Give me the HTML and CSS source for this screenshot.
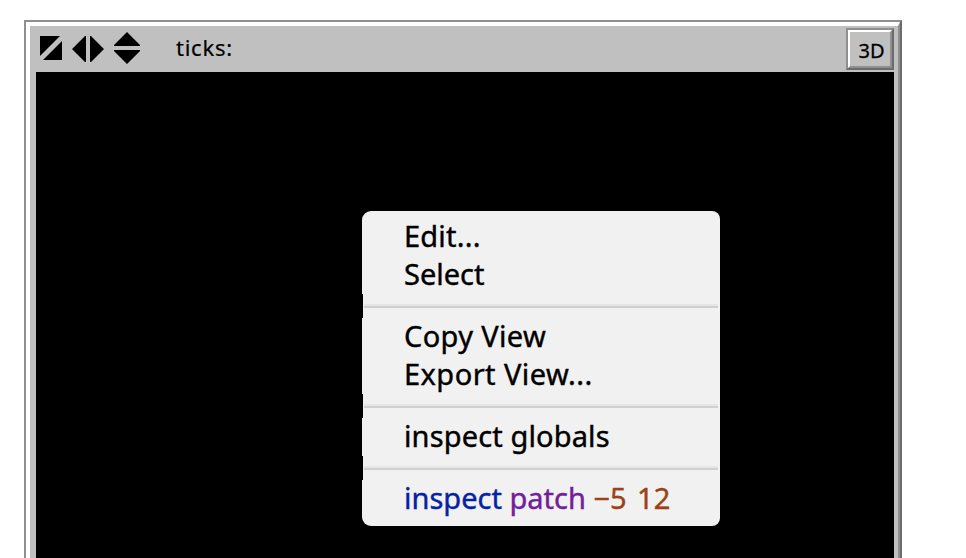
FILE: index.html
```
<!DOCTYPE html>
<html lang="en">
<head>
<meta charset="utf-8">
<title>View</title>
<link rel="stylesheet" href="styles.css">
</head>
<body>
<main class="frame">
  <div class="panel">
    <header class="toolbar">
      <svg class="resize-icons" width="104" height="46" viewBox="36 26 104 46" aria-hidden="true">
        <path d="M40 36H60L40 56ZM62 41V60H43Z"/>
        <path d="M86 36V62H85L72 49L85 36ZM90 36H91L104 49L91 62H90Z"/>
        <path d="M127 32L140 45V46H114V45ZM114 50H140V51L127 64L114 51Z"/>
      </svg>
      <span class="ticks">ticks:</span>
      <button class="view-3d"><span>3D</span></button>
    </header>
    <div class="world">
      <ul class="menu">
        <li class="item"><span class="edit">Edit...</span></li>
        <li class="item"><span class="select">Select</span></li>
        <li class="separator"></li>
        <li class="item"><span class="copy">Copy View</span></li>
        <li class="item"><span class="export">Export View...</span></li>
        <li class="separator"></li>
        <li class="item"><span class="globals">inspect globals</span></li>
        <li class="separator"></li>
        <li class="item"><span class="patch"><span class="verb">inspect</span> <span class="noun">patch</span> <span class="coords">−5 12</span></span></li>
      </ul>
    </div>
  </div>
</main>
</body>
</html>
```
FILE: styles.css
```
* { box-sizing: border-box; }
body {
  margin: 0;
  height: 558px;
  overflow: hidden;
  background: #fff;
  color: #000;
  font-family: "Noto Sans", "Open Sans", sans-serif;
}
.frame {
  width: 878px;
  height: 560px;
  margin: 20px 0 0 24px;
  border: 2px solid #8f8f8f;
  border-right-color: #6b6b6b;
  border-bottom: 0;
}
.panel {
  height: 558px;
  border: solid;
  border-width: 4px 2px 0 4px;
  border-color: #fff #8f8f8f #fff #fff;
  background: #c0c0c0;
  padding: 0 4px 0 6px;
}
.toolbar {
  display: flex;
  height: 46px;
}
.resize-icons { flex: none; }
.ticks {
  margin-left: 36px;
  font-size: 22px;
  line-height: 42px;
  letter-spacing: .75px;
  -webkit-text-stroke: .2px;
}
.view-3d {
  width: 48px;
  height: 42px;
  margin: 2px 0 0 auto;
  padding: 0;
  border: 2px solid;
  border-color: #8f8f8f #6b6b6b #6b6b6b #8f8f8f;
  background: #c0c0c0;
  font: 20px/36px "Noto Sans", sans-serif;
  color: #000;
  -webkit-text-stroke: .3px;
}
.view-3d span {
  display: block;
  height: 38px;
  padding-left: 3px;
  border: 2px solid;
  border-color: #fff #8f8f8f #8f8f8f #fff;
  line-height: 37px;
}
.world {
  height: 506px;
  padding: 139px 0 0 326px;
  background: #000;
}
.menu {
  width: 358px;
  height: 315px;
  margin: 0;
  padding: 5px 0 10px;
  list-style: none;
  background: #f1f1f1;
  border-radius: 9px 8px 8px 9px;
}
.item {
  height: 38px;
  padding-left: 42px;
  font-size: 29px;
  line-height: 39px;
  white-space: nowrap;
  -webkit-text-stroke: .4px;
}
.separator {
  height: 24px;
  padding: 10px 2px 0;
  border-left: 1px solid #000;
  position: relative;
  top: 2px;
}
.separator::before {
  content: "";
  display: block;
  margin-left: -1px;
  height: 2px;
  border-top: 2px solid #e6e6e6;
  background: #d0d0d0;
}
.edit { letter-spacing: .2px; }
.copy { letter-spacing: .35px; }
.export { letter-spacing: .45px; }
.globals { letter-spacing: .13px; }
.verb { color: #0522a5; }
.noun { color: #71209a; }
.coords { color: #9c4214; word-spacing: 3px; }
```
